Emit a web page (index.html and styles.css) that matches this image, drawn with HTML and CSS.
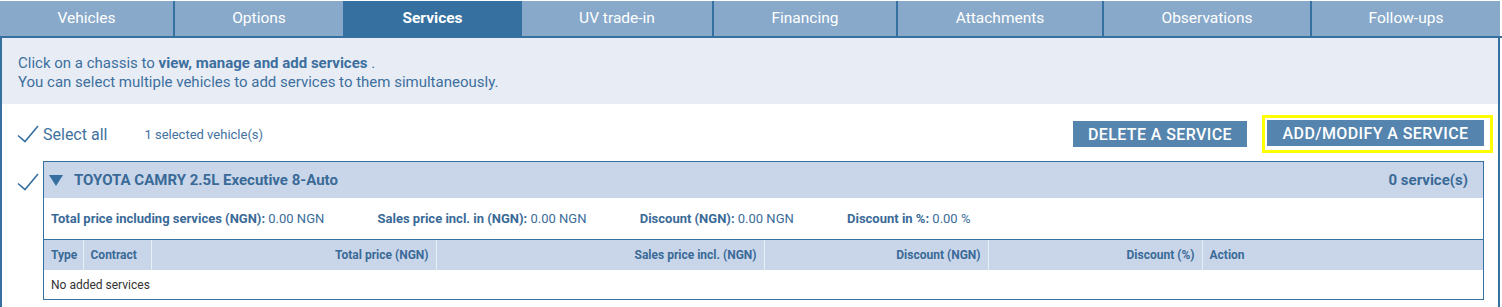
FILE: index.html
```html
<!DOCTYPE html>
<html lang="en">
<head>
  <meta charset="UTF-8">
  <title>Services</title>
  <link rel="stylesheet" href="styles.css">
</head>
<body>

  <div class="tabs">
    <div class="tab">Vehicles</div>
    <div class="tab">Options</div>
    <div class="tab active">Services</div>
    <div class="tab">UV trade-in</div>
    <div class="tab">Financing</div>
    <div class="tab">Attachments</div>
    <div class="tab">Observations</div>
    <div class="tab">Follow-ups</div>
  </div>

  <div class="tab-content">
    <div class="info">
      Click on a chassis to <b>view, manage and add services</b> .<br>
      You can select multiple vehicles to add services to them simultaneously.
    </div>

    <div class="toolbar">
      <div class="select-all">
        <svg class="check" width="22" height="18" viewBox="0 0 22 18"><polyline points="1,10.5 8,16.5 21,1" /></svg>
        <span class="select-label">Select all</span>
        <span class="selected-count">1 selected vehicle(s)</span>
      </div>
      <div class="actions">
        <button class="btn">DELETE A SERVICE</button>
        <span class="highlight"><button class="btn">ADD/MODIFY A SERVICE</button></span>
      </div>
    </div>

    <div class="vehicle-row">
      <div class="vehicle-check">
        <svg class="check" width="22" height="18" viewBox="0 0 22 18"><polyline points="1,10.5 8,16.5 21,1" /></svg>
      </div>
      <div class="vehicle-box">
        <div class="vehicle-header">
          <div class="vehicle-title"><span class="caret"></span>TOYOTA CAMRY 2.5L Executive 8-Auto</div>
          <div class="service-count">0 service(s)</div>
        </div>
        <div class="summary">
          <span class="item"><b>Total price including services (NGN):</b> 0.00 NGN</span>
          <span class="item"><b>Sales price incl. in (NGN):</b> 0.00 NGN</span>
          <span class="item"><b>Discount (NGN):</b> 0.00 NGN</span>
          <span class="item"><b>Discount in %:</b> 0.00 %</span>
        </div>
        <table class="services">
          <colgroup>
            <col style="width:39px">
            <col style="width:68px">
            <col style="width:285px">
            <col style="width:328px">
            <col style="width:224px">
            <col style="width:214px">
            <col>
          </colgroup>
          <thead>
            <tr>
              <th>Type</th>
              <th>Contract</th>
              <th class="num">Total price (NGN)</th>
              <th class="num">Sales price incl. (NGN)</th>
              <th class="num">Discount (NGN)</th>
              <th class="num">Discount (%)</th>
              <th>Action</th>
            </tr>
          </thead>
          <tbody>
            <tr>
              <td colspan="7">No added services</td>
            </tr>
          </tbody>
        </table>
      </div>
    </div>
  </div>

</body>
</html>
```

FILE: styles.css
```css
body {
  margin: 0;
  font-family: Roboto, "Liberation Sans", Arial, sans-serif;
  background: #fff;
  color: #3b6c9a;
}
.tabs {
  display: grid;
  grid-template-columns: 173px 170px 177px 192px 184px 206px 208px 190px;
  margin-top: 1px;
  border-bottom: 2px solid #3570a0;
}
.tab {
  background: #88a9ca;
  color: #fff;
  font-size: 15.5px;
  height: 35px;
  line-height: 35px;
  text-align: center;
  border-left: 2px solid #3570a0;
}
.tab:first-child {
  border-left: none;
}
.tab.active {
  background: #3570a0;
  font-weight: bold;
}
.tab-content {
  border-left: 2px solid #3570a0;
  border-right: 2px solid #3570a0;
  width: 1496px;
  min-height: 280px;
}
.info {
  background: #e8edf5;
  padding: 16px 16px 12px;
  font-size: 15px;
  line-height: 19px;
  color: #3d6f9e;
}
.toolbar {
  display: flex;
  justify-content: space-between;
  align-items: center;
  padding: 11px 5px 8px 15px;
}
.select-all {
  display: flex;
  align-items: center;
}
.check {
  display: block;
  fill: none;
  stroke: #3570a0;
  stroke-width: 1.6;
}
.select-label {
  font-size: 16px;
  margin-left: 4px;
  color: #4272a0;
}
.selected-count {
  font-size: 13px;
  margin-left: 37px;
  color: #4272a0;
}
.actions {
  display: flex;
  align-items: center;
  gap: 15px;
}
.btn {
  background: #5585ae;
  color: #fff;
  border: none;
  font-family: Roboto, "Liberation Sans", Arial, sans-serif;
  font-size: 16px;
  font-weight: 500;
  letter-spacing: 0.4px;
  height: 26px;
  padding: 0 15px;
  cursor: pointer;
}
.highlight {
  display: block;
  border: 3px solid #ffff00;
  padding: 2px 6px 4px 2px;
}
.highlight .btn {
  display: block;
  width: 217px;
  padding: 0;
}
.vehicle-row {
  display: flex;
  margin-right: 14px;
}
.vehicle-check {
  width: 41px;
  padding-left: 15px;
  padding-top: 12px;
  box-sizing: border-box;
}
.vehicle-box {
  flex: 1;
  border: 1px solid #3570a0;
}
.vehicle-header {
  display: flex;
  justify-content: space-between;
  align-items: center;
  background: #c9d6e9;
  height: 36px;
  padding: 0 15px 0 5px;
  font-size: 15px;
  font-weight: bold;
  color: #3a6a97;
}
.vehicle-title {
  display: flex;
  align-items: center;
}
.caret {
  width: 0;
  height: 0;
  border-left: 7px solid transparent;
  border-right: 7px solid transparent;
  border-top: 11px solid #3570a0;
  margin-right: 11px;
}
.summary {
  height: 41px;
  line-height: 41px;
  padding-left: 7px;
  font-size: 13px;
  color: #3b6c9a;
  border-bottom: 1px solid #3570a0;
}
.summary .item {
  margin-right: 50px;
}
.summary b {
  color: #3a6a97;
}
.services {
  width: 100%;
  border-collapse: collapse;
  table-layout: fixed;
  font-size: 12px;
}
.services th {
  background: #c9d6e9;
  color: #3a6a97;
  height: 30px;
  padding: 0 7px;
  text-align: left;
  border-left: 1px solid #e8eef6;
  white-space: nowrap;
}
.services th:first-child {
  border-left: none;
}
.services th.num {
  text-align: right;
}
.services td {
  height: 29px;
  padding: 0 7px;
  color: #333;
}
```
